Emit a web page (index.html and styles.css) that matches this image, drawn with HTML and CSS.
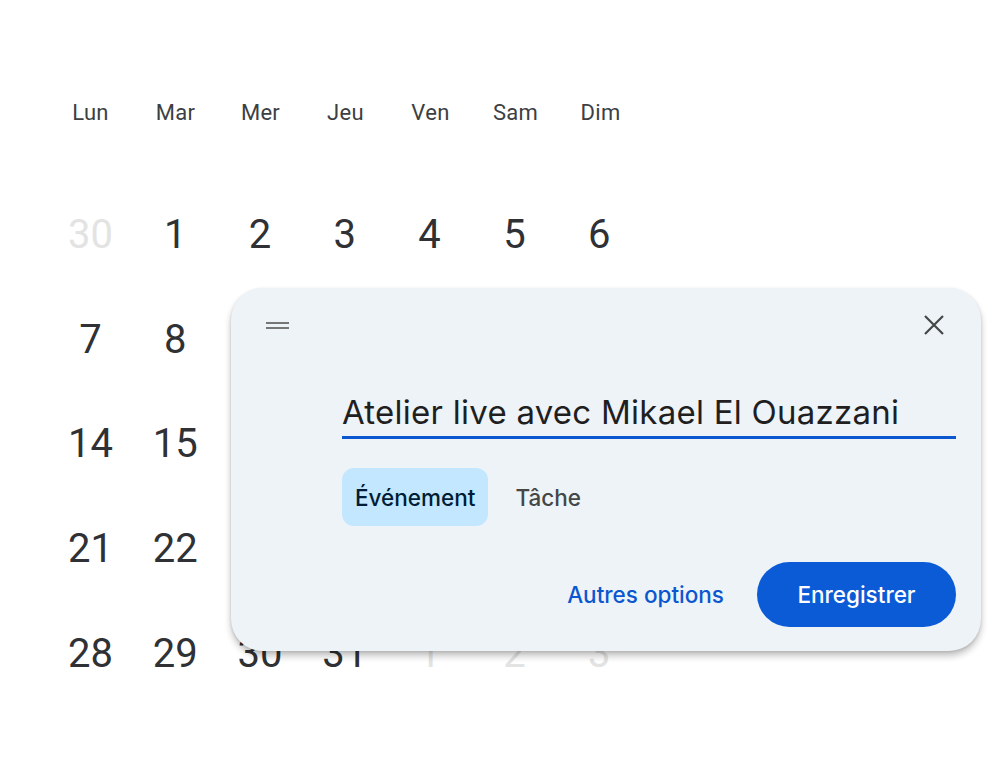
FILE: index.html
```html
<!DOCTYPE html>
<html lang="fr">
<head>
<meta charset="utf-8">
<title>Calendrier</title>
<link rel="stylesheet" href="styles.css">
</head>
<body>
<main class="page">
  <section class="calendar">
    <div class="weekdays">
      <span>Lun</span><span>Mar</span><span>Mer</span><span>Jeu</span><span>Ven</span><span>Sam</span><span>Dim</span>
    </div>
    <div class="days">
      <span class="muted">30</span><span>1</span><span>2</span><span>3</span><span>4</span><span>5</span><span>6</span>
      <span>7</span><span>8</span><span>9</span><span>10</span><span>11</span><span>12</span><span>13</span>
      <span>14</span><span>15</span><span>16</span><span>17</span><span>18</span><span>19</span><span>20</span>
      <span>21</span><span>22</span><span>23</span><span>24</span><span>25</span><span>26</span><span>27</span>
      <span>28</span><span>29</span><span>30</span><span>31</span><span class="muted">1</span><span class="muted">2</span><span class="muted">3</span>
    </div>
  </section>

  <div class="dialog" role="dialog">
    <div class="dialog-top">
      <span class="handle" aria-hidden="true"><i></i><i></i></span>
      <button class="close" aria-label="Fermer">
        <svg viewBox="0 0 24 24" width="24" height="24"><path d="M3 3 L21 21 M21 3 L3 21" stroke="#444746" stroke-width="2.2" fill="none"/></svg>
      </button>
    </div>
    <div class="dialog-body">
      <div class="title-field">Atelier live avec Mikael El Ouazzani</div>
      <div class="chips">
        <span class="chip active">Événement</span>
        <span class="chip">Tâche</span>
      </div>
      <div class="actions">
        <button class="text-btn">Autres options</button>
        <button class="filled-btn">Enregistrer</button>
      </div>
    </div>
  </div>
</main>
</body>
</html>
```

FILE: styles.css
```css
html, body {
  margin: 0;
  padding: 0;
  background: #ffffff;
}

.page {
  position: relative;
  width: 1000px;
  height: 784px;
  overflow: hidden;
  font-family: Roboto, "Liberation Sans", sans-serif;
}

.calendar {
  padding: 92px 0 0 48px;
}

.weekdays {
  display: grid;
  grid-template-columns: repeat(7, 85px);
  height: 40px;
  align-items: center;
  justify-items: center;
  font-size: 22px;
  letter-spacing: 0.3px;
  color: #3c4043;
}

.days {
  display: grid;
  grid-template-columns: repeat(7, 84.8px);
  grid-auto-rows: 104.75px;
  margin-top: 50px;
  align-items: center;
  justify-items: center;
  font-size: 40px;
  color: #303134;
}

.days .muted {
  color: #e3e3e3;
}

.dialog {
  position: absolute;
  left: 231px;
  top: 288px;
  width: 750px;
  height: 363px;
  box-sizing: border-box;
  background: #eef3f8;
  border-radius: 32px;
  box-shadow: 0 5px 7px rgba(0, 0, 0, 0.24), 0 1px 3px rgba(0, 0, 0, 0.12);
  font-family: Inter, Roboto, sans-serif;
  display: flex;
  flex-direction: column;
}

.dialog-top {
  display: flex;
  justify-content: space-between;
  align-items: center;
  padding: 22px 35px 0 35px;
  height: 30px;
}

.handle {
  display: flex;
  flex-direction: column;
  gap: 3px;
  width: 23px;
}

.handle i {
  display: block;
  height: 2px;
  background: #747775;
}

.close {
  border: 0;
  background: none;
  padding: 0;
  width: 24px;
  height: 24px;
  cursor: pointer;
}

.close svg {
  display: block;
}

.dialog-body {
  padding: 0 25px 24px 111px;
  display: flex;
  flex-direction: column;
  flex: 1;
}

.title-field {
  margin-top: 52px;
  font-size: 33px;
  letter-spacing: 0.25px;
  line-height: 40px;
  color: #1f1f1f;
  padding-bottom: 4px;
  border-bottom: 3px solid #0b57d0;
  white-space: nowrap;
}

.chips {
  display: flex;
  gap: 14px;
  margin-top: 29px;
}

.chip {
  height: 58px;
  padding: 0 13px;
  display: flex;
  align-items: center;
  border-radius: 12px;
  font-size: 22.5px;
  font-weight: 500;
  color: #444746;
}

.chip.active {
  background: #c2e7ff;
  color: #001d35;
}

.actions {
  margin-top: auto;
  display: flex;
  justify-content: flex-end;
  align-items: center;
  gap: 17px;
}

.text-btn {
  border: 0;
  background: none;
  font: inherit;
  font-size: 22.5px;
  font-weight: 500;
  color: #0b57d0;
  padding: 0 16px;
  height: 65px;
}

.filled-btn {
  border: 0;
  font: inherit;
  font-size: 22.5px;
  font-weight: 500;
  color: #ffffff;
  background: #0b5bd7;
  border-radius: 33px;
  width: 199px;
  height: 65px;
}
```
